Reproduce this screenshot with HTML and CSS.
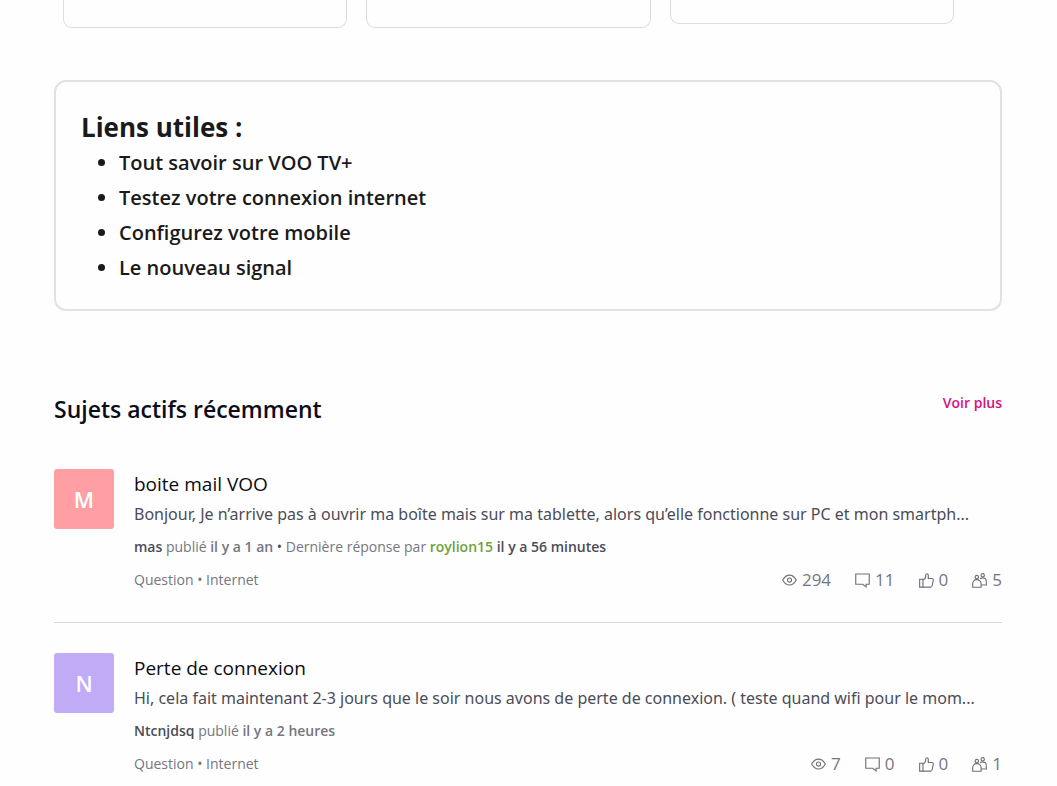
FILE: index.html
```html
<!DOCTYPE html>
<html lang="fr">
<head>
  <meta charset="UTF-8" />
  <meta name="viewport" content="width=device-width, initial-scale=1.0"/>
  <title>Communauté VOO</title>
  <link rel="stylesheet" href="styles.css">
</head>
<body>

  <!-- ICONS -->
  <svg class="sprite" aria-hidden="true">
    <symbol id="icon-eye" viewBox="0 0 16 16">
      <path d="M.7 7.500C2.600 4.200 5.100 2.200 8 2.200s5.400 2 7.300 5.300c-1.900 3.300-4.400 5.300-7.300 5.300S2.600 10.800.7 7.500z"/>
      <circle cx="8" cy="7.500" r="2.200"/>
    </symbol>
    <symbol id="icon-comment" viewBox="0 0 16 16">
      <path d="M.8 1h14.400v11h-3.400v2.800L8.200 12H.8z"/>
    </symbol>
    <symbol id="icon-like" viewBox="0 0 16 16">
      <path d="M.7 6.700h3.500v8.300H.7z"/>
      <path d="M4.200 7.400c1.800-.5 3-2 3-4.200V2.200C7.200.3 9.900.3 9.900 2.200v3.700h4c1.100 0 1.500.7 1.300 1.700l-1.200 6c-.2.900-.7 1.400-1.600 1.400H4.200"/>
    </symbol>
    <symbol id="icon-group" viewBox="0 0 16 16">
      <circle cx="5.200" cy="4.300" r="1.800"/>
      <circle cx="11.400" cy="2.500" r="1.800"/>
      <path d="M.7 15.200v-3.600c0-2.700 1.800-4.500 4.500-4.500s4.500 1.800 4.500 4.500v3.600z"/>
      <path d="M8.600 6.300c.7-.7 1.600-1.100 2.800-1.100 2.400 0 3.900 1.800 3.900 4.300v3.300H9.900"/>
    </symbol>
  </svg>

  <main class="page">

    <!-- CARDS -->
    <div class="cards">
      <div class="card"></div>
      <div class="card"></div>
      <div class="card card-short"></div>
    </div>

    <!-- LIENS UTILES -->
    <section class="links">
      <h2 class="links-title">Liens utiles :</h2>
      <ul class="links-list">
        <li><a href="#">Tout savoir sur VOO TV+</a></li>
        <li><a href="#">Testez votre connexion internet</a></li>
        <li><a href="#">Configurez votre mobile</a></li>
        <li><a href="#">Le nouveau signal</a></li>
      </ul>
    </section>

    <!-- SUJETS ACTIFS -->
    <section class="topics">
      <div class="topics-head">
        <h2 class="topics-title">Sujets actifs récemment</h2>
        <a class="more" href="#">Voir plus</a>
      </div>

      <article class="topic">
        <a class="avatar avatar-pink" href="#">M</a>
        <div class="topic-body">
          <h3 class="topic-title"><a href="#">boite mail VOO</a></h3>
          <p class="excerpt">Bonjour, Je n’arrive pas à ouvrir ma boîte mais sur ma tablette, alors qu’elle fonctionne sur PC et mon smartph...</p>
          <p class="meta"><a class="author" href="#">mas</a> publié <b>il y a 1 an</b> <span class="dot">•</span> Dernière réponse par <a class="replier" href="#">roylion15</a> <a class="date" href="#">il y a 56 minutes</a></p>
          <div class="topic-foot">
            <p class="category">Question • <a href="#">Internet</a></p>
            <div class="stats">
              <span class="stat"><svg class="icon"><use href="#icon-eye"/></svg>294</span>
              <span class="stat"><svg class="icon"><use href="#icon-comment"/></svg>11</span>
              <span class="stat"><svg class="icon"><use href="#icon-like"/></svg>0</span>
              <span class="stat"><svg class="icon"><use href="#icon-group"/></svg>5</span>
            </div>
          </div>
        </div>
      </article>

      <article class="topic">
        <a class="avatar avatar-purple" href="#">N</a>
        <div class="topic-body">
          <h3 class="topic-title"><a href="#">Perte de connexion</a></h3>
          <p class="excerpt">Hi, cela fait maintenant 2-3 jours que le soir nous avons de perte de connexion. ( teste quand wifi pour le mom...</p>
          <p class="meta"><a class="author" href="#">Ntcnjdsq</a> publié <b>il y a 2 heures</b></p>
          <div class="topic-foot">
            <p class="category">Question • <a href="#">Internet</a></p>
            <div class="stats">
              <span class="stat"><svg class="icon"><use href="#icon-eye"/></svg>7</span>
              <span class="stat"><svg class="icon"><use href="#icon-comment"/></svg>0</span>
              <span class="stat"><svg class="icon"><use href="#icon-like"/></svg>0</span>
              <span class="stat"><svg class="icon"><use href="#icon-group"/></svg>1</span>
            </div>
          </div>
        </div>
      </article>
    </section>

  </main>

</body>
</html>
```

FILE: styles.css
```css
* {
  box-sizing: border-box;
}
body {
  margin: 0;
  font-family: 'Segoe UI', 'Open Sans', 'Noto Sans', sans-serif;
  background: #fefefe;
  color: #1a1a1a;
}
h2, h3, p, ul {
  margin: 0;
}
a {
  color: inherit;
  text-decoration: none;
}
.sprite {
  display: none;
}
.page {
  padding: 0 55px 0 54px;
}

/* cards */
.cards {
  display: grid;
  grid-template-columns: repeat(3, 1fr);
  align-items: start;
  gap: 19px;
  padding: 0 48px 0 9px;
  height: 80px;
}
.card {
  height: 28px;
  border: 1px solid #dcdcdc;
  border-top: 0;
  border-radius: 0 0 9px 9px;
}
.card-short {
  height: 24px;
}

/* liens utiles */
.links {
  padding: 28px 25px 24px;
  border: 2px solid #e1e1e1;
  border-radius: 12px;
}
.links-title {
  font-size: 26px;
  line-height: 35px;
  font-weight: 700;
}
.links-list {
  padding-left: 38px;
  font-size: 20px;
  line-height: 35px;
  font-weight: 600;
}

/* sujets */
.topics {
  padding-top: 80px;
}
.topics-head {
  display: flex;
  justify-content: space-between;
  align-items: flex-start;
  margin-bottom: 42px;
}
.topics-title {
  font-size: 23px;
  line-height: 36px;
  font-weight: 600;
  color: #0c0c1a;
}
.more {
  font-size: 14px;
  line-height: 24px;
  font-weight: 600;
  color: #d6117f;
}
.topic {
  display: flex;
  gap: 20px;
  padding-bottom: 25px;
  margin-bottom: 30px;
  border-bottom: 1px solid #d8d8dc;
}
.topic:last-child {
  border-bottom: 0;
  margin-bottom: 0;
  padding-bottom: 0;
}
.avatar {
  display: flex;
  flex: none;
  align-items: center;
  justify-content: center;
  width: 60px;
  height: 60px;
  border-radius: 3px;
  font-size: 22px;
  font-weight: 600;
  color: #fff;
}
.avatar-pink {
  background: #ff9fa3;
}
.avatar-purple {
  background: #c0abf7;
}
.topic-body {
  flex: 1;
  min-width: 0;
}
.topic-title {
  font-size: 19px;
  line-height: 30px;
  font-weight: 400;
  color: #0c0c12;
}
.excerpt {
  font-family: 'Segoe UI', 'Noto Sans', sans-serif;
  font-size: 16px;
  line-height: 31px;
  color: #4b4c57;
  white-space: nowrap;
  overflow: hidden;
  text-overflow: ellipsis;
}
.meta {
  font-size: 14px;
  line-height: 33px;
  color: #75767f;
}
.meta b, .author, .replier, .date {
  font-weight: 600;
}
.author, .date, .dot {
  color: #4b4c57;
}
.replier {
  color: #71a03c;
}
.topic-foot {
  display: flex;
  justify-content: space-between;
  align-items: center;
  line-height: 34px;
  color: #75767f;
}
.category {
  font-size: 14px;
}
.stats {
  display: flex;
  gap: 24px;
  font-size: 17px;
}
.stat {
  display: flex;
  align-items: center;
  gap: 5px;
}
.icon {
  width: 15px;
  height: 15px;
  fill: none;
  stroke: #6f7079;
  stroke-width: 1.2;
}
```
